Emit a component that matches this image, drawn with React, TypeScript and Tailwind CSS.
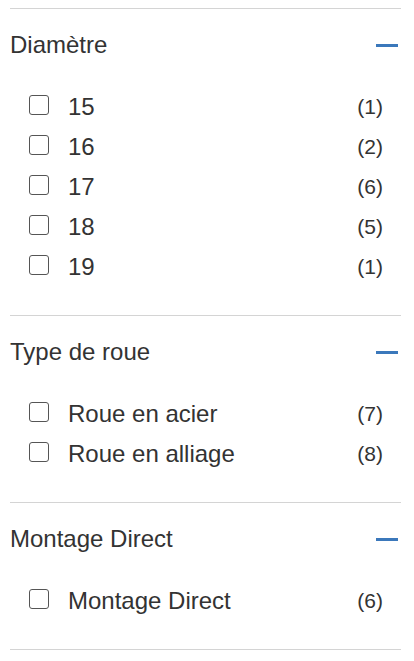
const sections = [
    {
        title: "Diamètre",
        items: [
            { label: "15", count: 1 },
            { label: "16", count: 2 },
            { label: "17", count: 6 },
            { label: "18", count: 5 },
            { label: "19", count: 1 },
        ],
    },
    {
        title: "Type de roue",
        items: [
            { label: "Roue en acier", count: 7 },
            { label: "Roue en alliage", count: 8 },
        ],
    },
    {
        title: "Montage Direct",
        items: [{ label: "Montage Direct", count: 6 }],
    },
];

export default function App() {
    return (
        <div className="bg-white w-[414px] h-[661px] pt-2 pl-[10px] pr-[13px] font-['Liberation_Sans',Arial,sans-serif] text-[#333]">
            <div className="border-b border-[#d4d4d4]">
                {sections.map((s) => (
                    <div key={s.title} className="border-t border-[#d4d4d4]">
                        {/* Header */}
                        <div className="h-[72px] flex items-center justify-between">
                            <span className="text-[24px] leading-none">{s.title}</span>
                            <span className="mr-[3px] block w-[22px] h-[3px] bg-[#3b78bb]" />
                        </div>

                        {/* Options */}
                        <ul className="pt-1 pb-[30px] pl-[19px] pr-[18px]">
                            {s.items.map((it) => (
                                <li key={it.label} className="h-10 flex items-center">
                                    <span className="w-5 h-5 rounded-[3px] border-[1.5px] border-[#555] bg-white shrink-0" />
                                    <span className="ml-[19px] mt-[4px] text-[24px] leading-none flex-1">{it.label}</span>
                                    <span className="mt-[2px] text-[21px] leading-none">({it.count})</span>
                                </li>
                            ))}
                        </ul>
                    </div>
                ))}
            </div>
        </div>
    )
}
